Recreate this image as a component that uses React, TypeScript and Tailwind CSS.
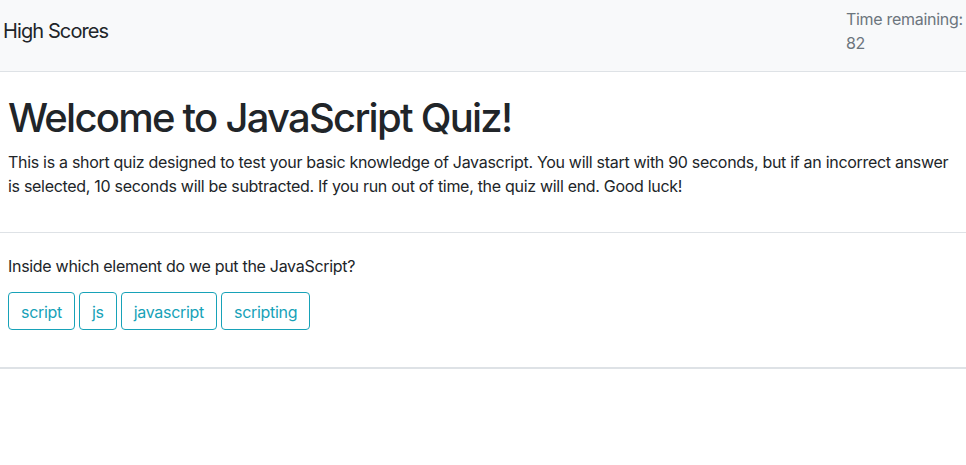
export default function App() {
  return (
    <div className="min-h-[465px] bg-white text-[#212529] font-['Inter',sans-serif] text-base leading-6 tracking-[-0.3px]">
      {/* Navbar */}
      <nav className="h-[72px] bg-[#f8f9fa] border-b border-[#dee2e6] flex items-start justify-between pl-[3px]">
        <a className="text-xl leading-[30px] mt-[16px] text-[#212529] tracking-[-0.9px]">High Scores</a>
        <div className="w-[120px] mt-[7px] text-[#6c757d] leading-6 whitespace-nowrap">
          <div>Time remaining:</div>
          <div>82</div>
        </div>
      </nav>

      {/* Intro */}
      <section className="px-2 pt-[22px] pb-[34px] border-b border-[#dee2e6]">
        <h1 className="text-[40px] leading-[48px] font-medium mb-[8px] tracking-[-1.75px]">Welcome to JavaScript Quiz!</h1>
        <p className="text-base leading-6 pr-1">
          This is a short quiz designed to test your basic knowledge of Javascript. You will start with 90 seconds, but if an incorrect answer is selected, 10 seconds will be subtracted. If you run out of time, the quiz will end. Good luck!
        </p>
      </section>

      {/* Question */}
      <section className="px-2 pt-[21px] pb-[37px] border-b-2 border-[#dee2e6]">
        <p className="mb-[14px]">Inside which element do we put the JavaScript?</p>
        <div className="flex gap-1">
          {["script", "js", "javascript", "scripting"].map((a) => (
            <button
              key={a}
              className="h-[38px] px-3 pt-px border border-[#17a2b8] text-[#17a2b8] rounded-[4px] leading-6"
            >
              {a}
            </button>
          ))}
        </div>
      </section>
    </div>
  );
}
